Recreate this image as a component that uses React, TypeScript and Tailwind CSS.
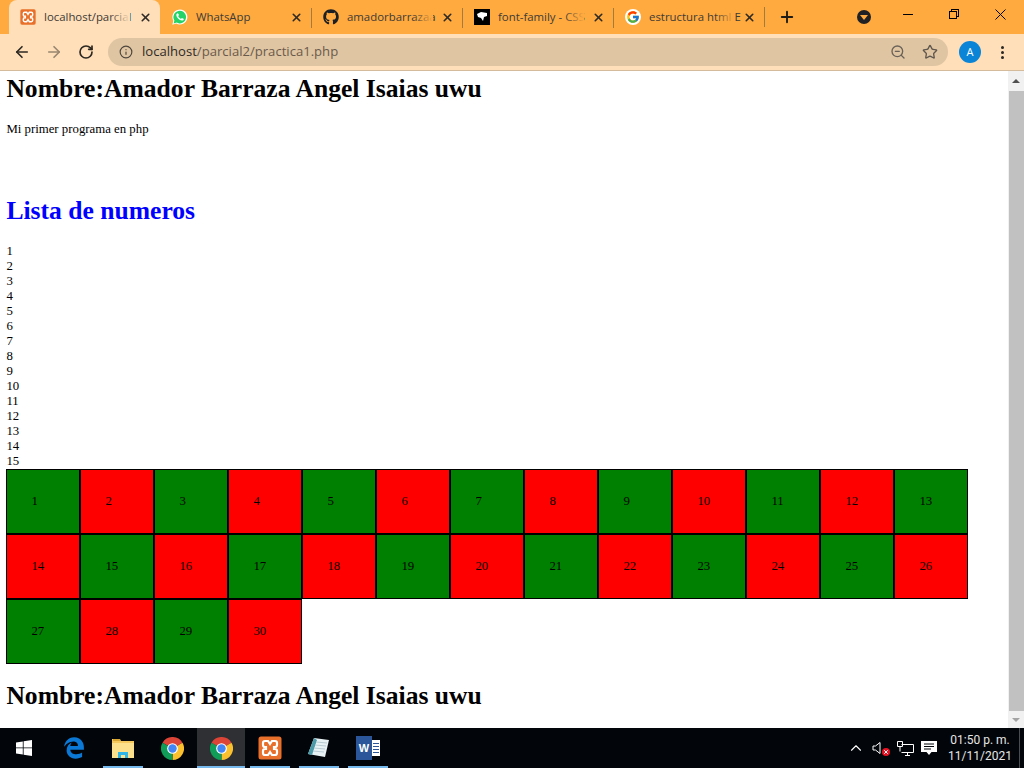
import React from "react";
import { ArrowLeft, ArrowRight, ChevronUp, Info, Plus, RotateCw, Star, X, ZoomOut } from "lucide-react";
import { FaGithub, FaEdgeLegacy } from "react-icons/fa";
import { FcGoogle } from "react-icons/fc";

const ChromeIcon = ({ size }: { size: number }) => (
  <svg width={size} height={size} viewBox="0 0 24 24">
    <path d="M12 12 L1.6 6 A12 12 0 0 1 22.4 6 Z" fill="#db4437" />
    <path d="M12 12 L22.4 6 A12 12 0 0 1 12 24 Z" fill="#fbc02d" />
    <path d="M12 12 L12 24 A12 12 0 0 1 1.6 6 Z" fill="#0f9d58" />
    <circle cx="12" cy="12" r="5.6" fill="#fff" />
    <circle cx="12" cy="12" r="4.4" fill="#4285f4" />
  </svg>
);

const XamppIcon = ({ size }: { size: number }) => (
  <svg width={size} height={size} viewBox="0 0 24 24">
    <rect x="0.5" y="0.5" width="23" height="23" rx="2.5" fill="#e8702a" />
    <path
      d="M7 5 h3 l2 3 l2-3 h3 a2 2 0 0 1 2 2 v2 a2 2 0 0 1-2 2 h-1 v2 h1 a2 2 0 0 1 2 2 v2 a2 2 0 0 1-2 2 h-3 l-2-3 l-2 3 h-3 a2 2 0 0 1-2-2 v-2 a2 2 0 0 1 2-2 h1 v-2 h-1 a2 2 0 0 1-2-2 v-2 a2 2 0 0 1 2-2z"
      fill="none"
      stroke="#fff"
      strokeWidth="2.2"
    />
  </svg>
);

const WhatsappIcon = () => (
  <svg width="16" height="16" viewBox="0 0 16 16">
    <path d="M0.3 15.7 L1.4 11.8 A7.5 7.5 0 1 1 4.3 14.6 Z" fill="#fff" />
    <path d="M1.6 14.4 L2.4 11.5 A6.3 6.3 0 1 1 4.6 13.6 Z" fill="#25d366" />
    <path
      d="M5.6 4.2 C5.2 4.2 4.3 4.9 4.3 6.1 C4.3 8.3 7.4 11.6 9.9 11.6 C11.1 11.6 11.8 10.7 11.8 10.2 C11.8 9.8 10.4 9 10 9 C9.6 9 9.3 9.8 8.9 9.8 C8.2 9.8 6.3 7.9 6.3 7.2 C6.3 6.8 7 6.5 7 6.1 C7 5.7 6.1 4.2 5.6 4.2 Z"
      fill="#fff"
    />
  </svg>
);

const FontIcon = () => (
  <svg width="16" height="16" viewBox="0 0 16 16">
    <rect width="16" height="16" fill="#000" />
    <path d="M3 5 L7 3 L13 4 L13 7 L10 8 L9 12 L7 9 L4 8 Z" fill="#fff" />
  </svg>
);

const WindowsIcon = () => (
  <svg width="16" height="16" viewBox="0 0 16 16" fill="#fff">
    <polygon points="0,2.4 6.8,1.4 6.8,7.5 0,7.5" />
    <polygon points="7.6,1.3 16,0 16,7.5 7.6,7.5" />
    <polygon points="0,8.3 6.8,8.3 6.8,14.6 0,13.6" />
    <polygon points="7.6,8.3 16,8.3 16,16 7.6,14.7" />
  </svg>
);

const ExplorerIcon = () => (
  <svg width="22" height="20" viewBox="0 0 22 20">
    <path d="M0 1 H8 L9 3 H22 V20 H0 Z" fill="#f5c95d" />
    <rect x="0" y="5" width="22" height="15" fill="#fde08b" />
    <rect x="1" y="1" width="7" height="2" fill="#d9a532" />
    <path d="M6 20 V14 H16 V20 H13 V17 H9 V20 Z" fill="#2fb4e8" />
  </svg>
);

const NotepadIcon = () => (
  <svg width="24" height="22" viewBox="0 0 24 22">
    <path d="M7 1 L22 3 L18 20 L1 17 Z" fill="#e8f1f4" />
    <path d="M7 1 L1 17 L5 18 L10 3 Z" fill="#4c9aa8" />
    <path d="M9 5 L20 6 M8 8 L19 9 M7 11 L18 12 M6 14 L17 15" stroke="#b9ccd3" strokeWidth="1" />
  </svg>
);

const WordIcon = () => (
  <div className="flex items-center h-[24px] w-[24px] relative">
    <div className="absolute left-[10px] top-[4px] w-[14px] h-[16px] bg-white flex flex-col justify-center gap-[2px] pl-[7px] pr-[1px]">
      <div className="h-px bg-[#2b579a]" />
      <div className="h-px bg-[#2b579a]" />
      <div className="h-px bg-[#2b579a]" />
      <div className="h-px bg-[#2b579a]" />
    </div>
    <div className="absolute left-0 top-0 w-[16px] h-[24px] bg-[#2b579a] text-white text-[11px] font-bold flex items-center justify-center font-['Liberation_Sans',sans-serif]">
      W
    </div>
  </div>
);

const tabs = [
  { icon: <XamppIcon size={16} />, text: "localhost/parcial", active: true },
  { icon: <WhatsappIcon />, text: "WhatsApp" },
  { icon: <FaGithub size={16} className="text-[#1b1f23]" />, text: "amadorbarrazaa", sep: true },
  { icon: <FontIcon />, text: "font-family - CSS", sep: true },
  { icon: <FcGoogle size={14} />, text: "estructura html E", sep: true, ring: true },
];

const Tab = ({ icon, text, active, sep, ring }: { icon: React.ReactNode; text: string; active?: boolean; sep?: boolean; ring?: boolean }) => (
  <div className={`relative flex items-center h-[34px] w-[151px] shrink-0 ${active ? "bg-[#fedfb9] rounded-t-lg pl-[11px]" : "pl-[12px]"}`}>
    {sep && <div className="absolute left-0 top-[8px] h-[20px] w-px bg-[#a57a3f]" />}
    <div className={`w-[16px] h-[16px] flex items-center justify-center shrink-0 ${ring ? "bg-white rounded-full" : ""}`}>{icon}</div>
    <div className="relative ml-[8px] w-[86px] whitespace-nowrap text-[11.4px] text-[#3e3a36]">
      {text}
      {text !== "WhatsApp" && (
        <div className={`absolute right-0 top-0 bottom-0 w-[20px] bg-gradient-to-r from-transparent ${active ? "to-[#fedfb9]" : "to-[#ffaa3f]"}`} />
      )}
    </div>
    <X size={13} strokeWidth={3} className={`shrink-0 text-[#2f2a25] ${active ? "ml-[9px]" : "ml-[8px]"}`} />
  </div>
);

const Cell = ({ n }: { n: number }) => (
  <div className={`h-[65px] border border-black flex items-center pl-[24px] text-[12.8px] text-black ${n % 2 === 1 ? "bg-[#008000]" : "bg-[#ff0000]"}`}>
    {n}
  </div>
);

const TaskSlot = ({ children, width, active, running }: { children: React.ReactNode; width: string; active?: boolean; running?: boolean }) => (
  <div className={`relative flex items-center justify-center h-[40px] shrink-0 ${width} ${active ? "bg-[#2f3033]" : ""}`}>
    {children}
    {running && <div className="absolute bottom-0 left-0 right-0 h-[2px] bg-[#76b9ed]" />}
  </div>
);

export default function App() {
  const numeros = Array.from({ length: 15 }, (_, i) => i + 1);
  const celdas = Array.from({ length: 30 }, (_, i) => i + 1);

  return (
    <div className="w-[1024px] h-[768px] flex flex-col overflow-hidden font-['Open_Sans',sans-serif]">
      {/* tab strip */}
      <div className="h-[34px] bg-[#ffaa3f] flex items-center pl-[9px] shrink-0">
        {tabs.map((t) => (
          <Tab key={t.text} {...t} />
        ))}
        <div className="h-[20px] w-px bg-[#a57a3f] shrink-0" />
        <Plus size={18} strokeWidth={2.5} className="ml-[13px] text-[#1f1b16]" />
        <div className="ml-[61px] w-[14px] h-[14px] rounded-full bg-[#202124] flex items-center justify-center">
          <div className="w-0 h-0 border-l-[4px] border-r-[4px] border-t-[5px] border-l-transparent border-r-transparent border-t-[#ffaa3f]" />
        </div>
        <div className="ml-[32px] mb-[6px] w-[10px] h-px bg-black" />
        <div className="ml-[36px] mb-[6px] relative w-[10px] h-[10px]">
          <div className="absolute left-[2px] top-0 w-[8px] h-[8px] border border-black" />
          <div className="absolute left-0 top-[2px] w-[8px] h-[8px] border border-black bg-[#ffaa3f]" />
        </div>
        <svg className="ml-[36px] mb-[6px]" width="11" height="11" viewBox="0 0 11 11" stroke="#000" strokeWidth="1">
          <path d="M0.5 0.5 L10.5 10.5 M10.5 0.5 L0.5 10.5" />
        </svg>
      </div>

      {/* toolbar */}
      <div className="h-[37px] bg-[#fedfb9] border-b border-[#d3bb9b] flex items-center shrink-0 pl-[13px]">
        <ArrowLeft size={18} strokeWidth={2.2} className="text-[#2b2721]" />
        <ArrowRight size={18} strokeWidth={2.2} className="ml-[14px] text-[#98856f]" />
        <RotateCw size={16} strokeWidth={2.5} className="ml-[15px] text-[#2b2721]" />
        <div className="ml-[14px] w-[840px] h-[28px] rounded-full bg-[#dfc5a2] flex items-center pl-[11px] pr-[10px]">
          <Info size={14} className="text-[#4d463e]" />
          <span className="ml-[9px] text-[13.1px] text-[#6a5a4c]">
            <span className="text-[#2f2a25]">localhost</span>/parcial2/practica1.php
          </span>
          <ZoomOut size={16} className="ml-auto text-[#6a6259]" />
          <Star size={16} strokeWidth={2} className="ml-[16px] text-[#5f574e]" />
        </div>
        <div className="ml-[11px] w-[22px] h-[22px] rounded-full bg-[#0a84d6] text-white text-[11px] flex items-center justify-center">A</div>
        <div className="ml-[20px] flex flex-col gap-[2px]">
          <div className="w-[3px] h-[3px] rounded-full bg-[#2b2721]" />
          <div className="w-[3px] h-[3px] rounded-full bg-[#2b2721]" />
          <div className="w-[3px] h-[3px] rounded-full bg-[#2b2721]" />
        </div>
      </div>

      {/* page */}
      <div className="flex-1 flex min-h-0 bg-white">
        <div className="flex-1 pl-[6.4px] pt-[3px] font-['Liberation_Serif',serif] text-black overflow-hidden">
          <h1 className="text-[25.6px] leading-[30px] font-bold">Nombre:Amador Barraza Angel Isaias uwu</h1>
          <p className="mt-[18px] text-[12.8px] leading-[15px]">Mi primer programa en php</p>
          <h1 className="mt-[59px] text-[25.6px] leading-[30px] font-bold text-[#0000ff]">Lista de numeros</h1>
          <div className="mt-[18px] text-[12.8px] leading-[15px]">
            {numeros.map((n) => (
              <div key={n}>{n}</div>
            ))}
          </div>
          <div className="grid grid-cols-[repeat(13,74px)]">
            {celdas.map((n) => (
              <Cell key={n} n={n} />
            ))}
          </div>
          <h1 className="mt-[17px] text-[25.6px] leading-[30px] font-bold">Nombre:Amador Barraza Angel Isaias uwu</h1>
        </div>
        <div className="w-[16px] bg-[#f1f1f1] flex flex-col items-center shrink-0">
          <div className="h-[20px] flex items-center justify-center">
            <div className="w-0 h-0 border-l-[4px] border-r-[4px] border-b-[4px] border-l-transparent border-r-transparent border-b-[#505050]" />
          </div>
          <div className="w-[15px] flex-1 bg-[#c1c1c1]" />
          <div className="h-[17px] flex items-center justify-center">
            <div className="w-0 h-0 border-l-[4px] border-r-[4px] border-t-[4px] border-l-transparent border-r-transparent border-t-[#a3a3a3]" />
          </div>
        </div>
      </div>

      {/* taskbar */}
      <div className="h-[40px] bg-[#020509] flex items-center shrink-0 text-white">
        <div className="w-[48px] flex items-center justify-center shrink-0">
          <WindowsIcon />
        </div>
        <div className="w-[47px] flex items-center justify-center shrink-0 pl-[5px]">
          <FaEdgeLegacy size={22} className="text-[#0a78d4]" />
        </div>
        <div className="w-[8px] shrink-0" />
        <TaskSlot width="w-[40px]" running>
          <ExplorerIcon />
        </TaskSlot>
        <div className="w-[54px] flex items-center justify-center shrink-0 pl-[4px]">
          <ChromeIcon size={23} />
        </div>
        <TaskSlot width="w-[48px]" active running>
          <ChromeIcon size={23} />
        </TaskSlot>
        <div className="w-[5px] shrink-0" />
        <TaskSlot width="w-[40px]" running>
          <XamppIcon size={24} />
        </TaskSlot>
        <div className="w-[9px] shrink-0" />
        <TaskSlot width="w-[40px]" running>
          <NotepadIcon />
        </TaskSlot>
        <div className="w-[9px] shrink-0" />
        <TaskSlot width="w-[40px]" running>
          <WordIcon />
        </TaskSlot>

        <ChevronUp size={18} strokeWidth={1.5} className="ml-[459px] text-white" />
        <div className="ml-[7px] relative w-[18px] h-[16px] flex items-center">
          <svg width="10" height="14" viewBox="0 0 10 14" fill="none" stroke="#fff" strokeWidth="1">
            <path d="M1 5 H3.5 L8 1.5 V12.5 L3.5 9 H1 Z" />
          </svg>
          <div className="absolute right-0 bottom-0 w-[8px] h-[8px] rounded-full bg-[#e81123] text-white flex items-center justify-center">
            <X size={6} strokeWidth={4} />
          </div>
        </div>
        <svg className="ml-[7px]" width="17" height="15" viewBox="0 0 17 15" fill="none" stroke="#fff" strokeWidth="1">
          <path d="M4.5 3.5 H16.5 V11.5 H4.5 M8 14.5 H13 M10.5 11.5 V14.5 M0.5 0.5 H5.5 V5.5 H0.5 Z M3 5.5 V10.5" />
        </svg>
        <svg className="ml-[7px]" width="16" height="16" viewBox="0 0 16 16">
          <path d="M0 1 H16 V12 H10.5 L8 15 L5.5 12 H0 Z" fill="#fff" />
          <path d="M3 4 H13 M3 6.5 H13 M3 9 H10" stroke="#020509" strokeWidth="1" />
        </svg>
        <div className="ml-[13px] w-[60px] shrink-0 flex flex-col items-center whitespace-nowrap text-[12px] leading-[16px] text-[#e6e6e6] font-['Roboto',sans-serif]">
          <span>01:50 p. m.</span>
          <span>11/11/2021</span>
        </div>
        <div className="ml-[9px] w-px h-[40px] bg-[#4a4d50] shrink-0" />
      </div>
    </div>
  );
}
